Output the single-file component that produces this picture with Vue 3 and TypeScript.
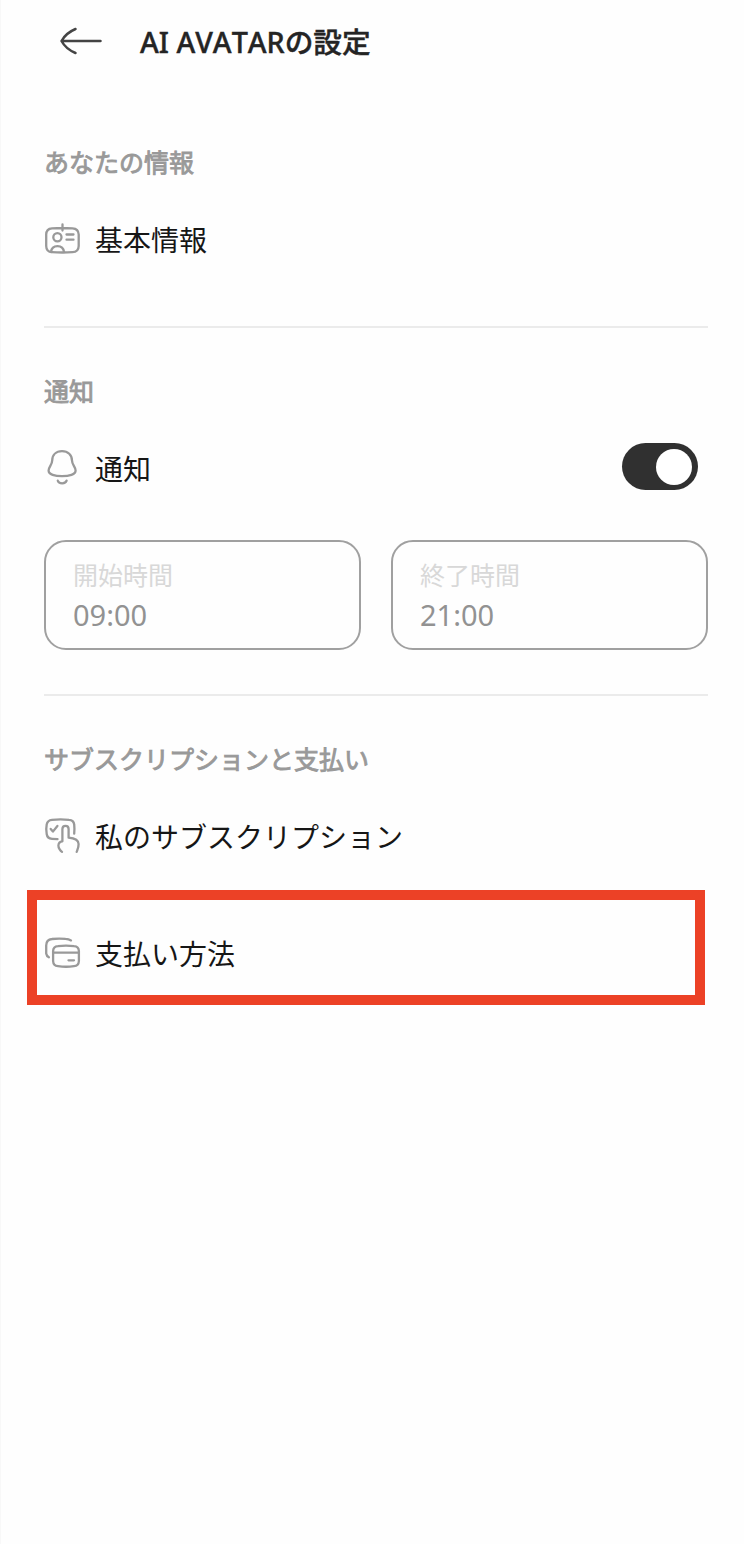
<script setup lang="ts">
import { ref } from 'vue'

interface TimeField {
  label: string
  value: string
}

const notificationsOn = ref<boolean>(true)
const times: TimeField[] = [
  { label: '開始時間', value: '09:00' },
  { label: '終了時間', value: '21:00' },
]
</script>

<template>
  <main class="screen">
    <header class="header">
      <button class="back" aria-label="戻る">
        <svg width="44" height="30" viewBox="0 0 44 30">
          <path d="M41.500 15H3M16.500 3C11 5.300 5.500 9.500 2.500 15C5.500 20.500 11 24.700 16.500 27" />
        </svg>
      </button>
      <h1 class="title">AI AVATARの設定</h1>
    </header>

    <section class="section">
      <h2 class="label">あなたの情報</h2>
      <div class="row">
        <svg class="icon" viewBox="0 0 36 36">
          <path d="M18.500 3.500V9.500M8 7.300Q18 6.700 28.500 7.300Q34.500 7.600 34.700 13.500V25Q34.500 31 28.500 31.200Q18 31.800 8 31.200Q2.300 31 2.200 25V13.500Q2.300 7.600 8 7.300Z" />
          <circle cx="13.400" cy="16.300" r="4.100" />
          <path d="M7 31C7.500 27 9.500 25.200 13.500 25.200S19.500 27 20 31M22.500 13.500H29.500M22.500 18.700H29.500" />
        </svg>
        <span class="name">基本情報</span>
      </div>
    </section>

    <section class="section notice">
      <h2 class="label">通知</h2>
      <div class="row">
        <svg class="icon raised" viewBox="0 0 36 36">
          <path d="M18 2.200C12 2.200 8.300 6 8.200 11.500C8.100 16 4.800 17.500 4.600 21.500C4.500 25.500 11 27.200 18 27.200S31.700 25.500 31.600 21.500C31.400 17.500 28.100 16 28 11.500C27.900 6 24 2.200 18 2.200ZM13.800 31.700C14.800 35.200 21.500 35.200 22.600 31.700" />
        </svg>
        <span class="name">通知</span>
        <button
          class="toggle"
          :class="{ on: notificationsOn }"
          role="switch"
          aria-label="通知"
          :aria-checked="notificationsOn"
          @click="notificationsOn = !notificationsOn"
        ><span class="knob"></span></button>
      </div>
      <div class="fields">
        <div v-for="time in times" :key="time.label" class="field">
          <span class="field-label">{{ time.label }}</span>
          <span class="field-value">{{ time.value }}</span>
        </div>
      </div>
    </section>

    <section class="section">
      <h2 class="label">サブスクリプションと支払い</h2>
      <div class="row">
        <svg class="icon raised" viewBox="0 0 36 36">
          <path d="M13.500 22.200L8 21.800Q3.300 21.500 2.700 17Q1.800 12 2.700 7.500Q3.500 3.200 8 2.800Q16.500 2 25 2.800Q29.700 3.100 30.200 7.500Q30.700 12 30.200 16.700M6.700 12L8.900 14.600L13.400 9" />
          <path d="M18 34.900C16.700 34 14.300 31 14.400 28.500C14.500 26 16 24.500 18.400 24.300V12C18.400 7.800 24.600 7.800 24.600 12V20.700C30 21.200 34.500 23 34.600 27C34.700 30 33.700 32 32.700 34.900" />
        </svg>
        <span class="name">私のサブスクリプション</span>
      </div>
      <div class="row payment">
        <svg class="icon" viewBox="0 0 36 36">
          <path d="M4.900 22.300C3.500 21.600 2.500 20.500 2.200 18.500V10.500Q2.300 4.400 8 4Q14.500 3.200 21.500 3.900Q24.800 4.100 27 5.400" />
          <path d="M14 11.200Q22 10 30 11.200Q34.700 11.500 34.900 16V26Q34.700 30.700 30 31.200Q22 32.300 14 31.200Q9.300 30.700 9.100 26V16Q9.300 11.500 14 11.200ZM9.100 17.700H34.900M24.500 25.300H30" />
        </svg>
        <span class="name">支払い方法</span>
        <span class="highlight"></span>
      </div>
    </section>
  </main>
</template>

<style>
body {
  margin: 0;
  background: #fefefe;
}
</style>

<style scoped>
.screen {
  box-sizing: border-box;
  width: 744px;
  height: 1544px;
  padding: 0 36px 0 43px;
  border-left: 1px solid #f8f8f8;
  background: #fefefe;
  font-family: "Noto Sans", "Noto Sans CJK JP", sans-serif;
  overflow: hidden;
}
.header {
  display: flex;
  align-items: center;
  height: 82px;
  padding-left: 15px;
}
button {
  padding: 0;
  border: 0;
  background: none;
}
.back {
  display: flex;
  width: 44px;
}
svg {
  display: block;
  fill: none;
  stroke: #999;
  stroke-width: 2.3;
  stroke-linecap: round;
  stroke-linejoin: round;
  overflow: visible;
}
.back svg {
  stroke: #444;
  stroke-width: 2.5;
}
.title {
  margin: 2px 0 0 37px;
  color: #242424;
  font-size: 28.7px;
  font-weight: 500;
  font-kerning: none;
  -webkit-text-stroke: 0.4px #242424;
  line-height: 40px;
  white-space: nowrap;
}
.section {
  box-sizing: border-box;
  height: 246px;
  padding-top: 59px;
  border-bottom: 2px solid #ebebeb;
}
.section.notice {
  height: 368px;
  padding-top: 42px;
}
.section:last-child {
  height: auto;
  padding-top: 42px;
  border: 0;
}
.label {
  height: 40px;
  margin: 0;
  color: #999;
  font-family: "Noto Sans CJK JP", sans-serif;
  font-size: 25px;
  font-weight: 400;
  -webkit-text-stroke: 0.9px #999;
  line-height: 40px;
}
.row {
  position: relative;
  display: flex;
  align-items: center;
  height: 40px;
  margin-top: 38px;
}
.icon {
  width: 36px;
  height: 36px;
}
.icon.raised {
  margin-bottom: 2px;
}
.name {
  margin-left: 15px;
  color: #161616;
  font-family: "Noto Sans CJK JP", sans-serif;
  font-size: 28px;
  line-height: 40px;
}
.toggle {
  box-sizing: border-box;
  width: 76px;
  height: 47px;
  margin: 0 10px 3px auto;
  padding: 5px 6px;
  border-radius: 24px;
  background: #aaa;
}
.toggle.on {
  background: #303030;
}
.knob {
  display: block;
  width: 36px;
  height: 36px;
  border-radius: 50%;
  background: #fff;
}
.toggle.on .knob {
  margin-left: auto;
}
.fields {
  display: grid;
  grid-template-columns: 1fr 1fr;
  gap: 30px;
  margin-top: 52px;
}
.field {
  box-sizing: border-box;
  display: flex;
  flex-direction: column;
  height: 110px;
  padding: 13px 27px;
  border: 2px solid #a0a0a0;
  border-radius: 22px;
}
.field-label {
  color: #d8d8d8;
  font-family: "Noto Sans CJK JP", sans-serif;
  font-size: 25px;
  line-height: 38px;
}
.field-value {
  margin-top: 2px;
  color: #929292;
  font-size: 29px;
  line-height: 40px;
}
.payment {
  margin-top: 77px;
}
.highlight {
  position: absolute;
  top: -43px;
  left: -17px;
  box-sizing: border-box;
  width: 678px;
  height: 115px;
  border: 10px solid #ec4126;
}
</style>
